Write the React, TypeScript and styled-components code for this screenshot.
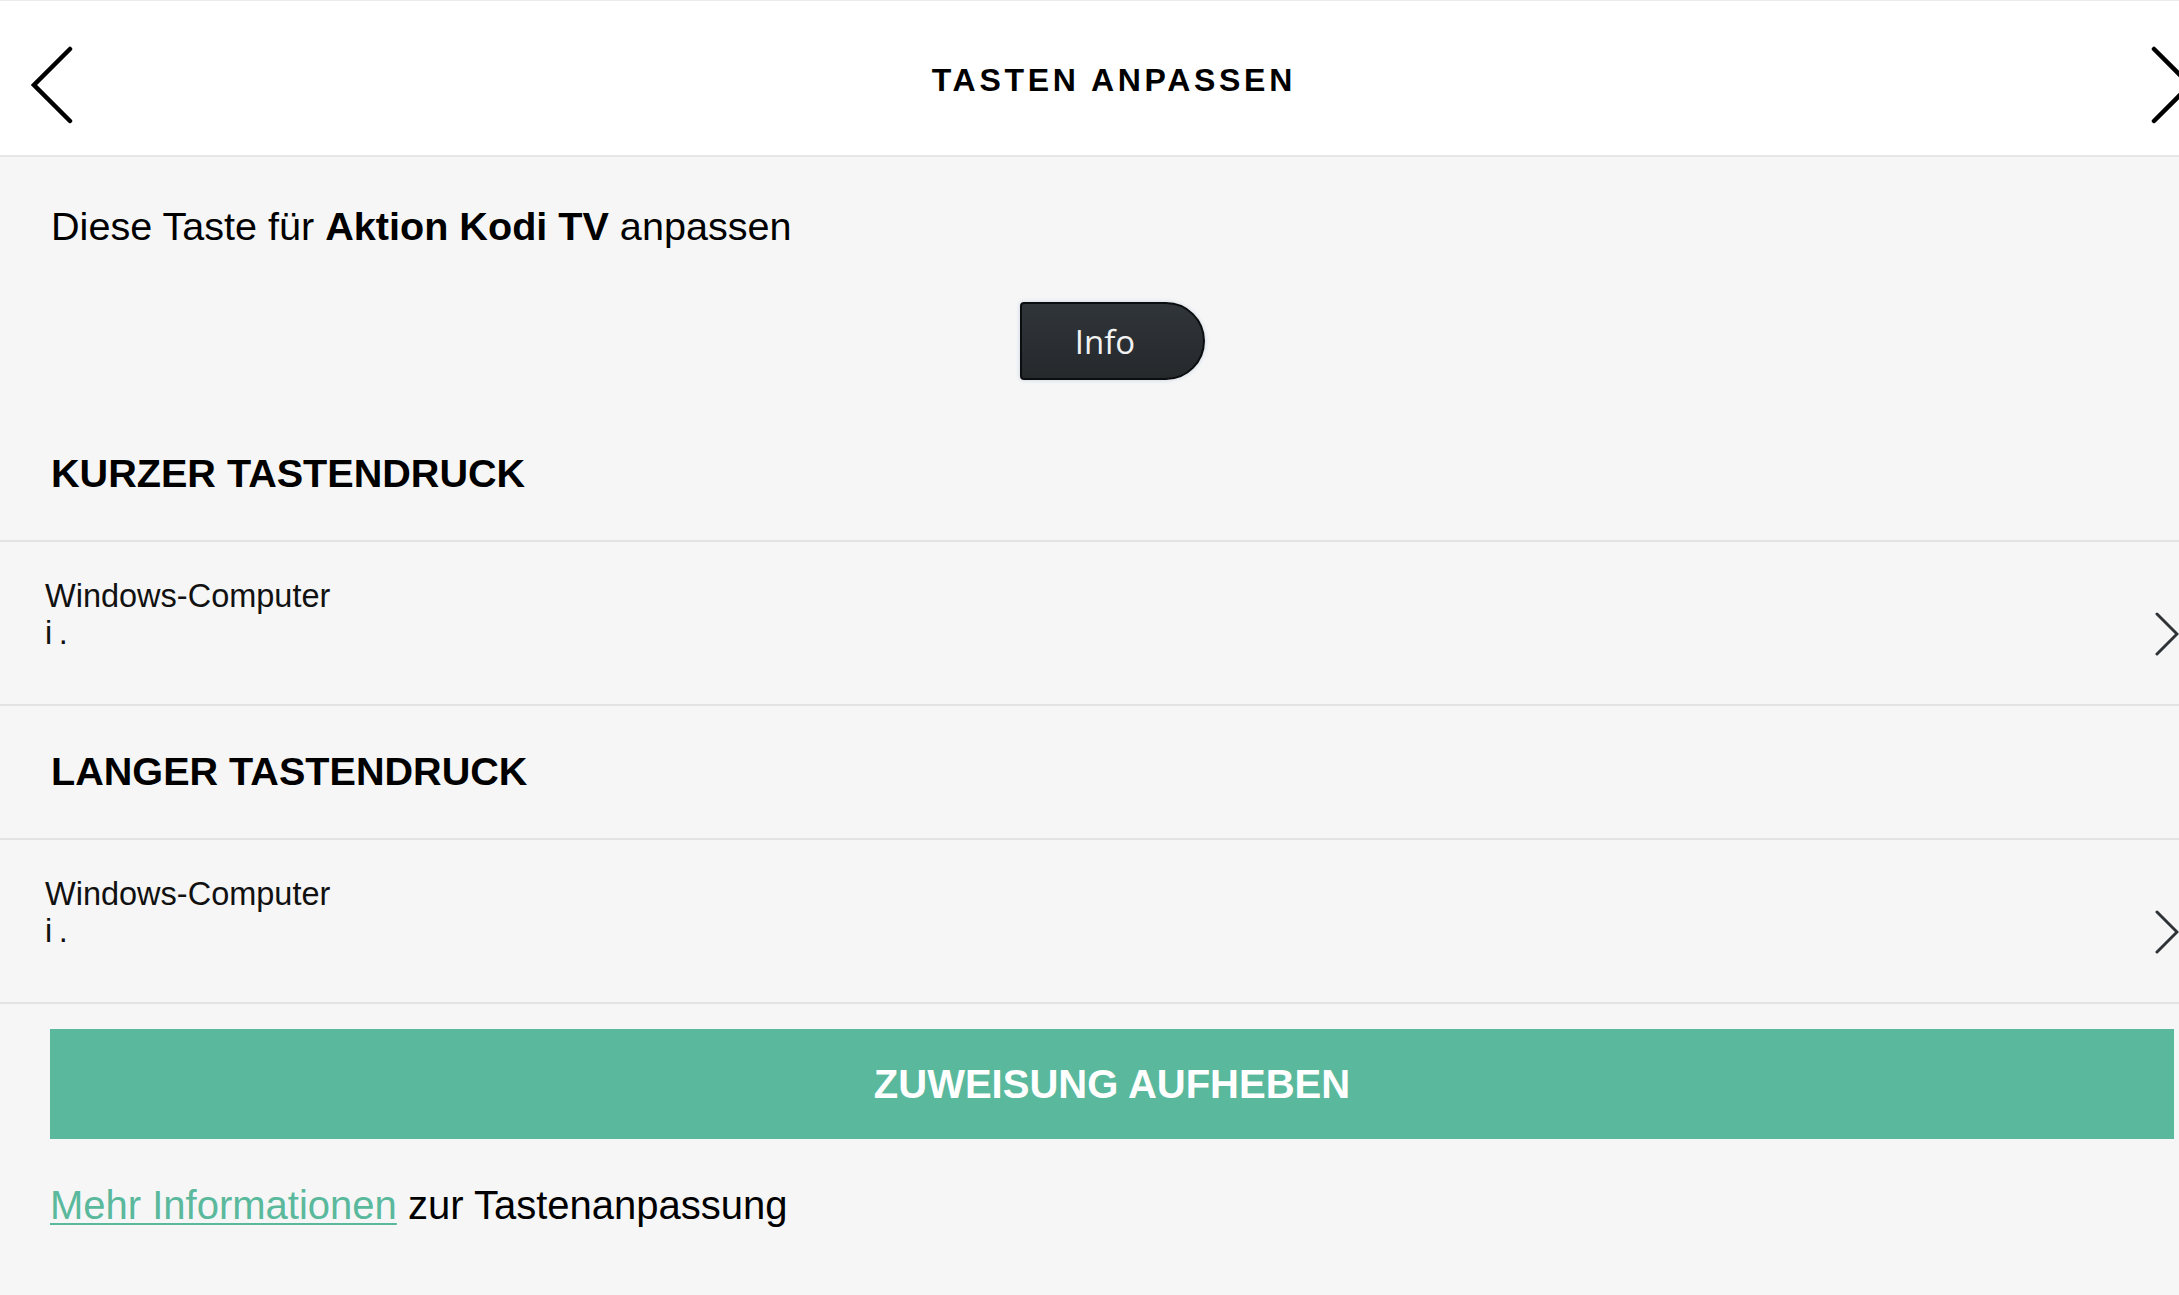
import React from "react";
import styled, { createGlobalStyle } from "styled-components";

const GlobalStyle = createGlobalStyle`
  html, body {
    margin: 0;
    padding: 0;
    overflow: hidden;
    background: #f6f6f6;
  }
  body {
    font-family: "Liberation Sans", Arial, Helvetica, sans-serif;
    color: #000;
  }
  * { box-sizing: border-box; }
`;

const Screen = styled.div`
  width: 2224px;
  min-height: 1295px;
  background: #f6f6f6;
  display: flex;
  flex-direction: column;
`;

const Header = styled.header`
  height: 157px;
  background: #fff;
  border-top: 1px solid #ececec;
  border-bottom: 2px solid #e6e6e6;
  display: grid;
  grid-template-columns: 1fr auto 1fr;
  align-items: center;
  padding: 4px 31px 0;
`;

const NavButton = styled.button<{ $side: "left" | "right" }>`
  background: none;
  border: none;
  padding: 0;
  margin-top: 9px;
  display: flex;
  justify-self: ${(p) => (p.$side === "left" ? "start" : "end")};
  cursor: pointer;
`;

const Title = styled.h1`
  margin: 0;
  font-size: 32px;
  font-weight: 700;
  letter-spacing: 3.7px;
  padding-left: 3.7px;
  color: #000;
`;

const Intro = styled.p`
  margin: 46px 0 0;
  padding: 0 51px;
  font-size: 39.6px;
  line-height: 46px;
  color: #000;
  b { font-weight: 700; }
`;

const KeyWrap = styled.div`
  display: flex;
  justify-content: center;
  margin-top: 53px;
  margin-bottom: 28px;
`;

const KeyButton = styled.div`
  width: 185px;
  height: 78px;
  background: linear-gradient(#30353a, #25292c);
  border: 2px solid #0c0d0e;
  border-radius: 4px 39px 39px 4px;
  box-shadow: 0 0 4px rgba(140, 170, 210, 0.45);
  display: flex;
  align-items: center;
  justify-content: center;
  padding-right: 14px;
  color: #f2f2f2;
  font-family: "Open Sans", "Liberation Sans", sans-serif;
  font-size: 33px;
  line-height: 1;
`;

const SectionHeading = styled.h2`
  margin: 0;
  padding: 42px 51px 44px;
  font-size: 39.6px;
  line-height: 46px;
  font-weight: 700;
  color: #000;
  border-bottom: 2px solid #e3e3e3;
`;

const Row = styled.div`
  height: 164px;
  display: flex;
  align-items: flex-start;
  justify-content: space-between;
  padding: 36px 44px 0 45px;
  border-bottom: 2px solid #e3e3e3;
`;

const RowText = styled.div`
  font-size: 32.5px;
  line-height: 37px;
  color: #111;
`;

const RowChevron = styled.svg`
  margin-top: 34px;
  flex-shrink: 0;
`;

const PrimaryButton = styled.button`
  margin: 25px 50px 0;
  height: 110px;
  border: none;
  background: #5ab99c;
  color: #fff;
  font-family: inherit;
  font-size: 40px;
  font-weight: 700;
  display: flex;
  align-items: center;
  justify-content: center;
  cursor: pointer;
`;

const Footer = styled.p`
  margin: 43px 0 0;
  padding: 0 50px;
  font-size: 40px;
  line-height: 46px;
  color: #000;
`;

const Link = styled.a`
  color: #5ab99c;
  text-decoration: underline;
  text-decoration-thickness: 2px;
  text-underline-offset: 4px;
`;

const BigChevron = ({ dir }: { dir: "left" | "right" }) => (
  <svg width="42" height="78" viewBox="0 0 42 78">
    <path
      d={dir === "left" ? "M39 3 L3 39 L39 75" : "M3 3 L39 39 L3 75"}
      fill="none"
      stroke="#000"
      strokeWidth="4.5"
      strokeLinecap="round"
      strokeLinejoin="miter"
    />
  </svg>
);

const AssignmentRow = ({ device, command }: { device: string; command: string }) => (
  <Row>
    <RowText>
      {device}
      <br />
      {command}
    </RowText>
    <RowChevron width="26" height="44" viewBox="0 0 26 44">
      <path d="M3 2 L23 22 L3 42" fill="none" stroke="#2f3336" strokeWidth="3" strokeLinecap="round" />
    </RowChevron>
  </Row>
);

export default function App() {
  return (
    <>
      <GlobalStyle />
      <Screen>
        <Header>
          <NavButton $side="left" aria-label="Zurück">
            <BigChevron dir="left" />
          </NavButton>
          <Title>TASTEN ANPASSEN</Title>
          <NavButton $side="right" aria-label="Weiter">
            <BigChevron dir="right" />
          </NavButton>
        </Header>
        <Intro>
          Diese Taste für <b>Aktion Kodi TV</b> anpassen
        </Intro>
        <KeyWrap>
          <KeyButton>Info</KeyButton>
        </KeyWrap>
        <SectionHeading>KURZER TASTENDRUCK</SectionHeading>
        <AssignmentRow device="Windows-Computer" command={"i\u2009."} />
        <SectionHeading>LANGER TASTENDRUCK</SectionHeading>
        <AssignmentRow device="Windows-Computer" command={"i\u2009."} />
        <PrimaryButton>ZUWEISUNG AUFHEBEN</PrimaryButton>
        <Footer>
          <Link href="#">Mehr Informationen</Link> zur Tastenanpassung
        </Footer>
      </Screen>
    </>
  );
}
